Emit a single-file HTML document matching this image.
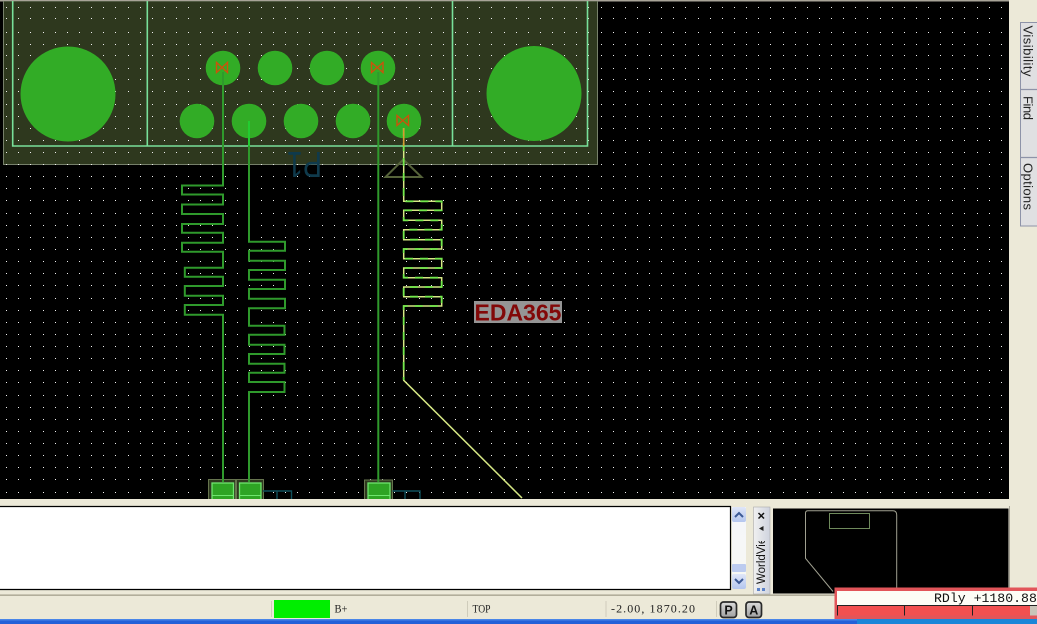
<!DOCTYPE html>
<html><head><meta charset="utf-8"><style>
html,body{margin:0;padding:0;background:#ece9d8;width:1037px;height:624px;overflow:hidden}
svg{position:absolute;left:0;top:0;display:block}
text{white-space:pre}
</style></head><body>
<svg width="1037" height="624" viewBox="0 0 1037 624" xmlns="http://www.w3.org/2000/svg">
<defs>
<path id="r" shape-rendering="crispEdges" fill="#f0f0f0" d="M6 0h1v1h-1z
m12 0h1v1h-1zm12 0h1v1h-1zm13 0h1v1h-1z
m12 0h1v1h-1zm12 0h1v1h-1zm12 0h1v1h-1zm12 0h1v1h-1zm12 0h1v1h-1zm12 0h1v1h-1zm13 0h1v1h-1z
m12 0h1v1h-1zm12 0h1v1h-1zm12 0h1v1h-1zm12 0h1v1h-1zm12 0h1v1h-1zm12 0h1v1h-1zm12 0h1v1h-1zm13 0h1v1h-1z
m12 0h1v1h-1zm12 0h1v1h-1zm12 0h1v1h-1zm12 0h1v1h-1zm12 0h1v1h-1zm12 0h1v1h-1zm12 0h1v1h-1zm13 0h1v1h-1z
m12 0h1v1h-1zm12 0h1v1h-1zm12 0h1v1h-1zm12 0h1v1h-1zm12 0h1v1h-1zm12 0h1v1h-1zm12 0h1v1h-1zm13 0h1v1h-1z
m12 0h1v1h-1zm12 0h1v1h-1zm12 0h1v1h-1zm12 0h1v1h-1zm12 0h1v1h-1zm12 0h1v1h-1zm13 0h1v1h-1z
m12 0h1v1h-1zm12 0h1v1h-1zm12 0h1v1h-1zm12 0h1v1h-1zm12 0h1v1h-1zm12 0h1v1h-1zm12 0h1v1h-1zm13 0h1v1h-1z
m12 0h1v1h-1zm12 0h1v1h-1zm12 0h1v1h-1zm12 0h1v1h-1zm12 0h1v1h-1zm12 0h1v1h-1zm12 0h1v1h-1zm13 0h1v1h-1z
m12 0h1v1h-1zm12 0h1v1h-1zm12 0h1v1h-1zm12 0h1v1h-1zm12 0h1v1h-1zm12 0h1v1h-1zm13 0h1v1h-1z
m12 0h1v1h-1zm12 0h1v1h-1zm12 0h1v1h-1zm12 0h1v1h-1zm12 0h1v1h-1zm12 0h1v1h-1zm12 0h1v1h-1zm13 0h1v1h-1z
m12 0h1v1h-1zm12 0h1v1h-1zm12 0h1v1h-1zm12 0h1v1h-1zm12 0h1v1h-1zm12 0h1v1h-1zm12 0h1v1h-1zm13 0h1v1h-1z
m12 0h1v1h-1zm12 0h1v1h-1z"/>
<linearGradient id="sb" x1="0" y1="0" x2="0" y2="1"><stop offset="0" stop-color="#f4f6fb"/><stop offset="1" stop-color="#f8f8f2"/></linearGradient>
<linearGradient id="btn" x1="0" y1="0" x2="0" y2="1"><stop offset="0" stop-color="#dfe6f8"/><stop offset="1" stop-color="#b4c6ee"/></linearGradient>
<linearGradient id="wv" x1="0" y1="0" x2="1" y2="0"><stop offset="0" stop-color="#f0f0f0"/><stop offset="1" stop-color="#cfd3de"/></linearGradient>
<linearGradient id="pa" x1="0" y1="0" x2="0" y2="1"><stop offset="0" stop-color="#dcdcdc"/><stop offset="1" stop-color="#a0a0a0"/></linearGradient>
<clipPath id="cv"><rect x="0" y="1" width="1009" height="498"/></clipPath>
<clipPath id="rc"><rect x="837" y="591" width="200" height="16"/></clipPath>
<clipPath id="wc"><rect x="753" y="541" width="17" height="46"/></clipPath>
</defs>
<rect width="1037" height="624" fill="#ece9d8"/>
<rect x="0" y="0" width="1009" height="499" fill="#000"/>
<rect x="0" y="0" width="1009" height="1.500" fill="#a8a498"/>
<g clip-path="url(#cv)">
<rect x="3.500" y="1" width="594" height="163.500" fill="#2e381e" stroke="#76806a" stroke-width="1"/>
<use href="#r" y="7"/><use href="#r" y="18"/><use href="#r" y="32"/><use href="#r" y="44"/><use href="#r" y="55"/><use href="#r" y="68"/><use href="#r" y="79"/><use href="#r" y="91"/><use href="#r" y="104"/><use href="#r" y="116"/><use href="#r" y="128"/><use href="#r" y="140"/><use href="#r" y="152"/><use href="#r" y="164"/><use href="#r" y="176"/><use href="#r" y="188"/><use href="#r" y="200"/><use href="#r" y="213"/><use href="#r" y="225"/><use href="#r" y="237"/><use href="#r" y="249"/><use href="#r" y="261"/><use href="#r" y="273"/><use href="#r" y="285"/><use href="#r" y="298"/><use href="#r" y="310"/><use href="#r" y="322"/><use href="#r" y="334"/><use href="#r" y="346"/><use href="#r" y="358"/><use href="#r" y="370"/><use href="#r" y="382"/><use href="#r" y="395"/><use href="#r" y="407"/><use href="#r" y="419"/><use href="#r" y="431"/><use href="#r" y="443"/><use href="#r" y="455"/><use href="#r" y="467"/><use href="#r" y="479"/><use href="#r" y="492"/>
<path d="M12.700 1V146H587.500V1M147.300 1V146M452.500 1V146" fill="none" stroke="#78e09a" stroke-width="1.600"/>
<g fill="#32ac26">
<circle cx="68" cy="94" r="47.500"/><circle cx="534" cy="93.500" r="47.500"/>
<circle cx="223" cy="68" r="17.300"/><circle cx="275" cy="68" r="17.300"/><circle cx="327" cy="68" r="17.300"/><circle cx="378" cy="68" r="17.300"/>
<circle cx="197" cy="121" r="17.300"/><circle cx="249" cy="121" r="17.300"/><circle cx="301" cy="121" r="17.300"/><circle cx="353" cy="121" r="17.300"/><circle cx="404" cy="121" r="17.300"/>
</g>
<text transform="rotate(180 304.500 165)" x="287" y="178" font-family="Liberation Sans" font-size="36" textLength="35" lengthAdjust="spacingAndGlyphs" fill="#0f3a4c">P1</text>
<path d="M385.500 177H421.500L403.300 159.500Z" fill="none" stroke="#56633a" stroke-width="2"/>
<g fill="#2e381e" stroke="#66744e" stroke-width="1">
<rect x="208.500" y="479.500" width="27" height="22"/><rect x="236.500" y="479.500" width="27" height="22"/><rect x="364.500" y="480" width="28" height="22"/>
</g>
<g fill="#2ea424" stroke="#6fe56f" stroke-width="1.300">
<rect x="212" y="483" width="21.500" height="18"/><rect x="239.500" y="483" width="21.500" height="18"/><rect x="368" y="483" width="22" height="18"/>
</g>
<path d="M212 495.500H233.500M239.500 495.500H261M368 495.500H390" stroke="#6fe56f" stroke-width="1"/>
<path d="M263 491H291.500V499M277 491V499M392.500 491H420V499M405 491V499" fill="none" stroke="#10505c" stroke-width="1.400"/>
<path d="M223 72V185.500H182V194.500H223V204.500H182V214H223V224H182V232.700H223V242.700H182V251.700H223V267.700H184.800V276.700H223V286H184.800V295.700H223V305H184.800V314.700H223V482" fill="none" stroke="#2f9a2c" stroke-width="2"/>
<path d="M249 121V241.700H285V250.700H249V260.700H285V270H249V279.700H285V289H249V298.700H285V308.300H249V325.700H284.500V334.700H249V344.700H284.500V354H249V363.700H284.500V372.700H249V382H284.500V392H249V482" fill="none" stroke="#2f9a2c" stroke-width="2"/>
<path d="M249 121V146" stroke="#22cc30" stroke-width="2"/>
<path d="M378.300 72V482" fill="none" stroke="#2f9a2c" stroke-width="2"/>
<path d="M403.700 128V201.300H441.700V210.300H403.700V220.300H441.700V229.700H403.700V239.700H441.700V249H403.700V258.700H441.700V268H403.700V277.700H441.700V287H403.700V296.700H441.700V306H403.700V380.300L522 498" fill="none" stroke="#d6e884" stroke-width="1.500"/>
<path d="M403.700 128V201.300H441.700V210.300H403.700V220.300H441.700V229.700H403.700V239.700H441.700V249H403.700V258.700H441.700V268H403.700V277.700H441.700V287H403.700V296.700H441.700V306H403.700V380" fill="none" stroke="#74e84c" stroke-width="1.800" stroke-dasharray="8 7"/>
<path d="M403.700 128V146" stroke="#d89a30" stroke-width="1.500"/>
<g fill="none" stroke="#cc520c" stroke-width="1.400">
<path d="M216.500 62.500V72.500L227.500 62.500V72.500Z"/><path d="M371.500 62.500V72.500L383 62.500V72.500Z"/><path d="M397 115.500V125.500L408.500 115.500V125.500Z"/>
</g>
<rect x="474" y="301" width="88" height="22" fill="#959595"/>
<text x="474.500" y="320.300" font-family="Liberation Sans" font-weight="700" font-size="23" fill="#820808">EDA365</text>
</g>
<rect x="0" y="506" width="731" height="84" fill="#fff"/>
<path d="M0 506.500H730.500V589.500H0" fill="none" stroke="#000" stroke-width="1.200"/>
<rect x="732" y="507" width="14" height="81" fill="url(#sb)"/>
<rect x="732" y="507" width="14" height="15" rx="2" fill="url(#btn)"/>
<rect x="732" y="564" width="14" height="8" rx="1" fill="#bccbef"/>
<rect x="732" y="574" width="14" height="15" rx="2" fill="url(#btn)"/>
<path d="M735 517L739 513L743 517M735 579L739 583L743 579" fill="none" stroke="#3c5a96" stroke-width="2"/>
<rect x="753.500" y="507" width="16.500" height="87" fill="url(#wv)" stroke="#aaa" stroke-width=".6"/>
<path d="M758.500 513L764 518.500M764 513L758.500 518.500" stroke="#111" stroke-width="1.500"/>
<path d="M759 528.500L763.500 526V531Z" fill="#222"/>
<g clip-path="url(#wc)"><text transform="translate(765 584) rotate(-90)" font-family="Liberation Sans" font-size="11.500" fill="#111">WorldView</text></g>
<rect x="757" y="588" width="3" height="3" fill="#5c82c8"/><rect x="762" y="588" width="3" height="3" fill="#5c82c8"/>
<rect x="773" y="508.500" width="235.500" height="85" fill="#000"/>
<path d="M1009.500 506V595H771" fill="none" stroke="#a9a698" stroke-width="1"/>
<path d="M833 591.500L805.500 558.300V513Q805.500 510.700 808 510.700H893Q896.700 510.700 896.700 515V594" fill="none" stroke="#a0a090" stroke-width="1"/>
<rect x="829.500" y="513.500" width="40" height="15" fill="none" stroke="#6f8a5c" stroke-width="1"/>
<rect x="0" y="594.500" width="835" height="1.300" fill="#a39f8c"/>
<rect x="274" y="600" width="56" height="18" fill="#00ee00"/>
<path d="M271.500 601V617M467.500 601V617M606 601V617M716.500 601V617" stroke="#cfccbb" stroke-width="1"/>
<text x="334.500" y="612.500" font-family="Liberation Serif" font-size="12" textLength="13" lengthAdjust="spacingAndGlyphs" fill="#222">B+</text>
<text x="472.500" y="612.500" font-family="Liberation Serif" font-size="12" textLength="18" lengthAdjust="spacingAndGlyphs" fill="#222">TOP</text>
<text x="611" y="612.500" font-family="Liberation Serif" font-size="12" textLength="84" lengthAdjust="spacing" fill="#222">-2.00, 1870.20</text>
<rect x="720.500" y="602" width="16" height="15.500" rx="3" fill="url(#pa)" stroke="#2a2a2a" stroke-width="1.700"/>
<rect x="746" y="602" width="15.500" height="15.500" rx="3" fill="url(#pa)" stroke="#2a2a2a" stroke-width="1.700"/>
<text x="728.500" y="614.300" text-anchor="middle" font-family="Liberation Sans" font-weight="700" font-size="12.500" fill="#111">P</text>
<text x="753.800" y="614.300" text-anchor="middle" font-family="Liberation Sans" font-weight="700" font-size="12.500" fill="#111">A</text>
<rect x="0" y="619" width="1037" height="5" fill="#2360d8"/>
<rect x="0" y="619" width="1037" height="1.500" fill="#4a86e8"/>
<rect x="857" y="619" width="180" height="5" fill="#1a86d8"/>
<rect x="834.500" y="587.500" width="203" height="31.500" fill="#e2555a"/>
<rect x="837" y="591" width="200" height="15" fill="#fdfdf6"/>
<g clip-path="url(#rc)"><text x="934" y="602" font-family="Liberation Mono" font-size="13.200" fill="#111">RDly +1180.88</text></g>
<rect x="837" y="606" width="200" height="9.500" fill="#f25050"/>
<rect x="1030" y="606" width="7" height="9.500" fill="#c9c4b8"/>
<path d="M837.500 615.500V605.500H1037M904.500 606V615.500M972.500 606V615.500" fill="none" stroke="#222" stroke-width="1"/>
<rect x="1020.500" y="22.500" width="17" height="203.500" fill="#e0e0e2" stroke="#8e93a8" stroke-width="1"/>
<path d="M1020.500 89.500H1037M1020.500 157.500H1037" stroke="#8e93a8" stroke-width="1.300"/>
<g font-family="Liberation Sans" font-size="13" fill="#222">
<text transform="translate(1023.500 25.500) rotate(90)" textLength="51" lengthAdjust="spacing">Visibility</text>
<text transform="translate(1023.500 96) rotate(90)" textLength="24" lengthAdjust="spacing">Find</text>
<text transform="translate(1023.500 163) rotate(90)" textLength="47" lengthAdjust="spacing">Options</text>
</g>
</svg>
</body></html>
